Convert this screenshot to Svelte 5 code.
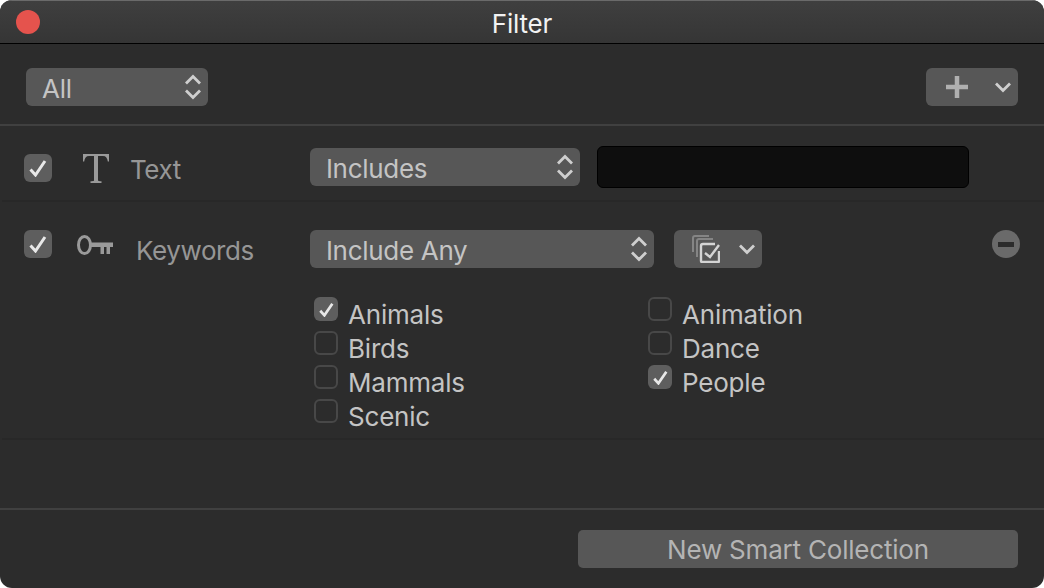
<script lang="ts">
  const leftKeywords = [
    { name: "Animals", checked: true },
    { name: "Birds", checked: false },
    { name: "Mammals", checked: false },
    { name: "Scenic", checked: false },
  ];
  const rightKeywords = [
    { name: "Animation", checked: false },
    { name: "Dance", checked: false },
    { name: "People", checked: true },
  ];
</script>

{#snippet updown()}
  <svg class="updown" width="18" height="26" viewBox="0 0 18 26" aria-hidden="true">
    <path d="M2 9.5 9 2.5 16 9.5M2 16.5 9 23.5 16 16.5" />
  </svg>
{/snippet}

{#snippet chevron()}
  <svg class="chevron" width="18" height="12" viewBox="0 0 18 12" aria-hidden="true">
    <path d="M2 2.5 9 9.5 16 2.5" />
  </svg>
{/snippet}

{#snippet check()}
  <svg viewBox="0 0 18 18" aria-hidden="true">
    <path d="M1.5 10.5 6.5 16 16 2" />
  </svg>
{/snippet}

<div class="window">
  <header class="titlebar">
    <span class="close"></span>
    <h1>Filter</h1>
  </header>

  <div class="toolbar">
    <div class="control all">
      <span>All</span>
      {@render updown()}
    </div>
    <div class="control add">
      <svg width="22" height="22" viewBox="0 0 22 22" aria-hidden="true">
        <path class="plus" d="M0 8.75h8.75V0h4.5v8.75H22v4.5h-8.75V22h-4.5v-8.75H0z" />
      </svg>
      {@render chevron()}
    </div>
  </div>

  <section class="rule text-rule">
    <span class="box on large">{@render check()}</span>
    <svg class="t-icon" width="26" height="29" viewBox="0 0 26 29" aria-hidden="true">
      <path d="M0 0h26v7.5h-1.2C24.3 4 23 2 20 2h-5v24c0 .8.7 1.2 2 1.2h1.5V29h-11v-1.8H9c1.3 0 2-.4 2-1.2V2H6C3 2 1.700 4 1.200 7.500H0z" />
    </svg>
    <span class="rule-label">Text</span>
    <div class="control includes">
      <span>Includes</span>
      {@render updown()}
    </div>
    <div class="search"></div>
  </section>

  <section class="rule keyword-rule">
    <div class="keyword-head">
      <span class="box on large">{@render check()}</span>
      <svg class="key-icon" width="36" height="20" viewBox="0 0 36 20" aria-hidden="true">
        <ellipse cx="7.5" cy="10" rx="6" ry="8.500" />
        <path class="key-shaft" d="M13 7.500h23v4.500h-3v7h-3.500v-7h-2.500v7h-3.500v-7H13z" />
      </svg>
      <span class="rule-label keywords">Keywords</span>
      <div class="control include-any">
        <span>Include Any</span>
        {@render updown()}
      </div>
      <div class="control stack">
        <svg width="28" height="28" viewBox="0 0 28 28" aria-hidden="true">
          <path class="back" d="M1 17V3a2 2 0 0 1 2-2h14" />
          <path class="back" d="M5 22V6a2 2 0 0 1 2-2h14" />
          <path class="front" d="M23 9H11a2 2 0 0 0-2 2v15a1 1 0 0 0 1 1h16a1 1 0 0 0 1-1V16" />
          <path class="front" d="M13 18l5 4 9-12" />
        </svg>
        {@render chevron()}
      </div>
      <span class="minus"><i></i></span>
    </div>

    <div class="keyword-list">
      <ul>
        {#each leftKeywords as item}
          <li>
            <span class="box" class:on={item.checked}>
              {#if item.checked}{@render check()}{/if}
            </span>
            {item.name}
          </li>
        {/each}
      </ul>
      <ul>
        {#each rightKeywords as item}
          <li>
            <span class="box" class:on={item.checked}>
              {#if item.checked}{@render check()}{/if}
            </span>
            {item.name}
          </li>
        {/each}
      </ul>
    </div>
  </section>

  <div class="spacer"></div>

  <footer>
    <button type="button">New Smart Collection</button>
  </footer>
</div>

<style>
  :global(body) {
    margin: 0;
    background: #fff;
  }

  .window {
    display: flex;
    flex-direction: column;
    width: 1044px;
    height: 588px;
    overflow: hidden;
    border-radius: 12px;
    background: #2c2c2c;
    color: #c4c4c4;
    font-family: Inter, "Liberation Sans", sans-serif;
    font-size: 26px;
    letter-spacing: -0.2px;
  }

  .titlebar {
    position: relative;
    flex: none;
    height: 42px;
    border-top: 1px solid #6a6a6a;
    border-bottom: 1px solid #000;
    background: linear-gradient(#3f3f3f, #353535);
    text-align: center;
  }

  h1 {
    margin: 0;
    color: #f2f2f2;
    font-size: 26px;
    font-weight: 400;
    line-height: 46px;
  }

  .close {
    position: absolute;
    top: 9px;
    left: 16px;
    width: 24px;
    height: 24px;
    border-radius: 50%;
    background: #e5534d;
  }

  .control {
    display: flex;
    flex: none;
    align-items: center;
    justify-content: space-between;
    box-sizing: border-box;
    height: 38px;
    border-radius: 6px;
    background: #575757;
    color: #c4c4c4;
    line-height: 38px;
  }

  .control span {
    margin-top: 4px;
  }

  .updown,
  .chevron {
    fill: none;
    stroke: #cfcfcf;
    stroke-width: 2.800;
  }

  .toolbar {
    display: flex;
    flex: none;
    align-items: center;
    justify-content: space-between;
    box-sizing: border-box;
    height: 82px;
    padding: 24px 26px 18px;
    border-bottom: 2px solid #404040;
  }

  .all {
    width: 182px;
    padding: 0 6px 0 16px;
  }

  .add {
    width: 92px;
    padding: 0 6px 0 20px;
  }

  .plus {
    fill: #b0b0b0;
  }

  .rule {
    flex: none;
    box-sizing: border-box;
    margin-left: 2px;
    border-bottom: 2px solid #282828;
  }

  .text-rule {
    display: flex;
    align-items: center;
    height: 76px;
    padding: 8px 0 0 22px;
  }

  .text-rule .box {
    margin-top: 2px;
  }

  .box {
    display: flex;
    flex: none;
    align-items: center;
    justify-content: center;
    box-sizing: border-box;
    width: 24px;
    height: 24px;
    border: 2px solid #484848;
    border-radius: 6px;
  }

  .box.on {
    border: 0;
    background: #5e5e5e;
  }

  .box.large {
    width: 28px;
    height: 28px;
  }

  .box svg {
    width: 15px;
    height: 15px;
    fill: none;
    stroke: #e8e8e8;
    stroke-width: 3.200;
  }

  .box.large svg {
    width: 18px;
    height: 18px;
    stroke-width: 3;
  }

  .t-icon {
    margin-top: 2px;
    margin-left: 31px;
    fill: #9a9a9a;
  }

  .rule-label {
    margin-top: 4px;
    margin-left: 21px;
    color: #969696;
    letter-spacing: -0.4px;
  }

  .includes {
    width: 270px;
    margin-left: 129px;
    padding: 0 6px 0 16px;
  }

  .includes span,
  .include-any span {
    letter-spacing: -0.3px;
  }

  .search {
    flex: none;
    box-sizing: border-box;
    width: 372px;
    height: 42px;
    margin-left: 17px;
    border: 1px solid #000;
    border-radius: 6px;
    background: #0e0e0e;
  }

  .keyword-rule {
    height: 238px;
    padding: 28px 0 0 22px;
  }

  .keyword-head {
    display: flex;
    align-items: flex-start;
  }

  .key-icon {
    margin-top: 5px;
    margin-left: 25px;
    fill: none;
    stroke: #9a9a9a;
    stroke-width: 3;
  }

  .key-shaft {
    fill: #9a9a9a;
    stroke: none;
  }

  .keywords {
    margin-top: 2px;
    margin-left: 23px;
    line-height: 38px;
  }

  .include-any {
    width: 344px;
    margin-left: 56px;
    padding: 0 6px 0 16px;
  }

  .stack {
    width: 88px;
    margin-left: 20px;
    padding: 0 6px 0 18px;
  }

  .back {
    fill: none;
    stroke: #858585;
    stroke-width: 2;
  }

  .front {
    fill: none;
    stroke: #d4d4d4;
    stroke-width: 2.400;
  }

  .minus {
    display: flex;
    align-items: center;
    justify-content: center;
    width: 28px;
    height: 28px;
    margin-left: 230px;
    border-radius: 50%;
    background: #6a6a6a;
  }

  .minus i {
    width: 16px;
    height: 5px;
    background: #2c2c2c;
  }

  .keyword-list {
    display: grid;
    grid-template-columns: 334px 1fr;
    padding: 27px 0 0 290px;
  }

  ul {
    margin: 0;
    padding: 0;
    list-style: none;
  }

  li {
    display: flex;
    align-items: flex-start;
    gap: 10px;
    height: 34px;
    line-height: 36px;
  }

  .spacer {
    flex: 1;
    border-bottom: 2px solid #404040;
  }

  footer {
    display: flex;
    flex: none;
    justify-content: flex-end;
    height: 78px;
    box-sizing: border-box;
    padding: 20px 26px 0;
  }

  button {
    width: 440px;
    height: 38px;
    padding: 0;
    border: 0;
    border-radius: 5px;
    background: #575757;
    color: #b4b4b4;
    font: inherit;
    letter-spacing: inherit;
  }
</style>
